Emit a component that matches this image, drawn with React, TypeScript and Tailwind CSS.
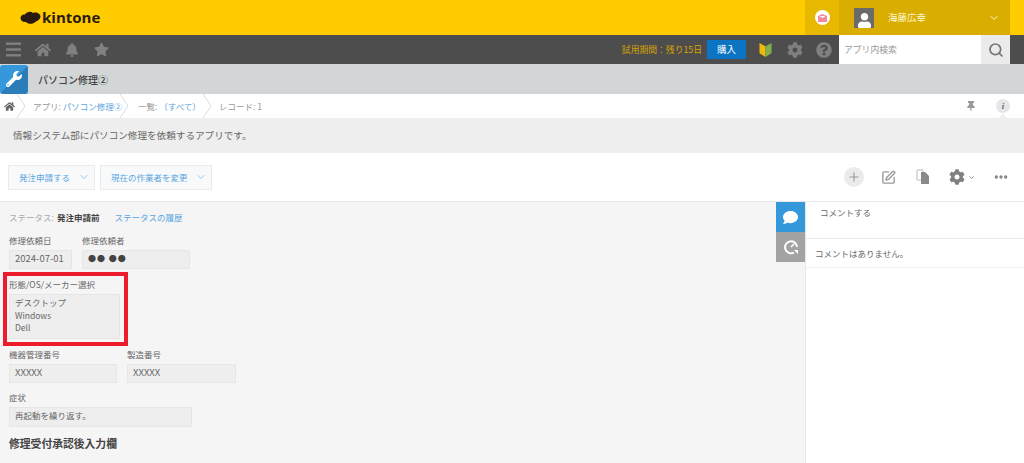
import React from "react";
import { ChevronDown, Search, Plus, SquarePen, Ellipsis } from "lucide-react";
import { FaHome, FaBell, FaStar, FaCog, FaQuestionCircle, FaWrench, FaThumbtack, FaComment, FaUser } from "react-icons/fa";

function Field({ label, value, w, h = "h-[19px]", size = "text-[8.5px]" }: { label: string; value: React.ReactNode; w: string; h?: string; size?: string }) {
  return (
    <div className={w}>
      <div className="text-[8.5px] leading-[10px] text-[#666] h-[15px] whitespace-nowrap">{label}</div>
      <div className={`${h} ${size} bg-[#eeeeee] border border-[#e6e6e6] pl-[5px] leading-[15px] text-[#666] whitespace-nowrap`}>{value}</div>
    </div>
  );
}

function Sep() {
  return (
    <svg className="absolute right-0 top-0" width="10" height="24" viewBox="0 0 10 24">
      <path d="M1 0 L9 12 L1 24" fill="none" stroke="#dcdcdc" strokeWidth="1" />
    </svg>
  );
}

function Crumb({ children, w, pl }: { children: React.ReactNode; w: string; pl: string }) {
  return (
    <div className={`relative h-full flex items-center ${w}`}>
      <div className={`${pl} text-[8.5px] text-[#999] whitespace-nowrap`}>{children}</div>
      <Sep />
    </div>
  );
}

export default function App() {
  return (
    <div className="relative w-[1024px] h-[463px] overflow-hidden bg-white flex flex-col" style={{ fontFamily: '"Noto Sans CJK JP", "Noto Sans", sans-serif' }}>
      {/* top bar */}
      <div className="h-[35px] shrink-0 bg-[#ffcc00] flex items-center justify-between">
        <div className="flex items-center pl-[20px] gap-[1px]">
          <svg width="21" height="14" viewBox="0 0 21 14"><path d="M0.5 7 C0.5 4.5 3 3 5 3.5 C7 0.5 11 0 13 2 C16 0.5 20.5 2.5 20.5 5.5 C20.5 8 18 9.5 16 10.5 C13 13.5 8 13.5 6 11 C3 11.5 0.5 9.5 0.5 7Z" fill="#2b1a12" /></svg>
          <span className="text-[15px] font-bold text-[#2b1a12] leading-none" style={{ fontFamily: '"Open Sans", sans-serif' }}>kintone</span>
        </div>
        <div className="flex h-full">
          <div className="w-[34px] bg-[#e6b800] flex items-center justify-center">
            <div className="w-[15px] h-[15px] rounded-full bg-white flex items-center justify-center">
              <svg width="9" height="8" viewBox="0 0 9 8">
                <path d="M0 2 L4.5 0 L9 2 V8 H0Z" fill="#f08a9c" />
                <path d="M1.5 2 H7.5 L4.5 4Z" fill="#fff" />
              </svg>
            </div>
          </div>
          <div className="w-[171px] bg-[#d9ae00] flex items-center pl-[15px] mr-[14px]">
            <div className="w-[20px] h-[20px] bg-[#6a6a6a] flex items-end justify-center overflow-hidden">
              <FaUser size={15} color="#fff" />
            </div>
            <span className="ml-[14px] text-[9.5px] text-[#fff6d0] whitespace-nowrap">海藤広幸</span>
            <ChevronDown size={12} color="#fff6d0" className="ml-[62px]" />
          </div>
        </div>
      </div>

      {/* dark nav */}
      <div className="h-[29px] shrink-0 bg-[#4d4d4d] flex items-center justify-between">
        <div className="flex items-center h-full">
          <svg className="ml-[6px]" width="15" height="15" viewBox="0 0 15 15" fill="#808080">
            <rect y="0.5" width="15" height="2.4" /><rect y="6.3" width="15" height="2.4" /><rect y="12.1" width="15" height="2.4" />
          </svg>
          <FaHome size={16} color="#808080" className="ml-[14px]" />
          <FaBell size={14} color="#808080" className="ml-[14px]" />
          <FaStar size={15} color="#808080" className="ml-[15px]" />
        </div>
        <div className="flex items-center h-full">
          <span className="text-[8.8px] text-[#d9a400] whitespace-nowrap">試用期間：残り15日</span>
          <div className="ml-[5px] w-[39px] h-[19px] bg-[#0b75c4] text-white text-[9.5px] flex items-center justify-center">購入</div>
          <svg className="ml-[13px]" width="13" height="16" viewBox="0 0 14 16">
            <path d="M0.5 0.5 L7 4 V15.5 L0.5 11.5Z" fill="#f0b90b" />
            <path d="M13.5 0.5 L7 4 V15.5 L13.5 11.5Z" fill="#7fb04d" />
          </svg>
          <FaCog size={16} color="#7f7f7f" className="ml-[15px]" />
          <FaQuestionCircle size={16} color="#808080" className="ml-[13px]" />
          <div className="ml-[7px] w-[142px] h-full bg-white flex items-center pl-[5px] text-[8.8px] text-[#999]">アプリ内検索</div>
          <div className="w-[29px] h-full bg-[#ebebeb] flex items-center justify-center mr-[14px]">
            <Search size={16} color="#777" strokeWidth={2.6} />
          </div>
        </div>
      </div>

      {/* app title */}
      <div className="h-[30px] shrink-0 bg-[#d2d6d7] flex items-center">
        <div className="w-[28px] h-[29px] bg-linear-to-br from-[#3498db] from-50% to-[#2a7db8] to-50% rounded-[3px] flex items-center justify-center">
          <FaWrench size={16} color="#fff" />
        </div>
        <span className="ml-[10px] text-[10px] font-medium text-[#444]">パソコン修理②</span>
      </div>

      {/* breadcrumb */}
      <div className="h-[24px] shrink-0 bg-white flex items-center justify-between">
        <div className="flex items-center h-full">
          <div className="relative h-full w-[26px] flex items-center pl-[4px]">
            <FaHome size={11} color="#666" />
            <Sep />
          </div>
          <Crumb w="w-[103px]" pl="pl-[7px]">アプリ: <span className="text-[#5aa5e0]">パソコン修理②</span></Crumb>
          <Crumb w="w-[83px]" pl="pl-[9px]">一覧: <span className="text-[#5aa5e0]">（すべて）</span></Crumb>
          <div className="pl-[7px] text-[8.5px] text-[#999] whitespace-nowrap">レコード: 1</div>
        </div>
        <div className="flex items-center">
          <FaThumbtack size={10} color="#999" />
          <div className="relative ml-[20px] mr-[14px] w-[14px] h-[14px] rounded-full bg-[#e4e6e8] flex items-center justify-center text-[9px] italic font-bold text-[#666] leading-none" style={{ fontFamily: '"Liberation Serif", serif' }}>
            i
            <div className="absolute left-[4px] top-[16px] w-[6px] h-[6px] rotate-45 bg-[#eeeeee]" />
          </div>
        </div>
      </div>

      {/* description */}
      <div className="h-[35px] shrink-0 bg-[#eeeeee] flex items-center pl-[13px] text-[9.6px] text-[#666]">
        情報システム部にパソコン修理を依頼するアプリです。
      </div>

      {/* toolbar */}
      <div className="h-[49px] shrink-0 bg-white border-b border-[#e8e8e8] flex items-center justify-between">
        <div className="flex pl-[8px] gap-[5px]">
          <div className="w-[87px] h-[25px] bg-[#f7f9fa] border border-[#ebebeb] flex items-center text-[8.5px] text-[#5aa5e0] pl-[10px] whitespace-nowrap">
            発注申請する<ChevronDown size={12} color="#7ab5e5" strokeWidth={1.5} className="ml-[8px]" />
          </div>
          <div className="w-[112px] h-[25px] bg-[#f7f9fa] border border-[#ebebeb] flex items-center text-[8.5px] text-[#5aa5e0] pl-[10px] whitespace-nowrap">
            現在の作業者を変更<ChevronDown size={12} color="#7ab5e5" strokeWidth={1.5} className="ml-[7px]" />
          </div>
        </div>
        <div className="flex items-center pr-[15px]">
          <div className="w-[20px] h-[20px] rounded-full bg-[#ebebeb] flex items-center justify-center"><Plus size={14} color="#999" /></div>
          <SquarePen size={15} color="#999" strokeWidth={2.2} className="ml-[17px]" />
          <svg className="ml-[20px]" width="14" height="16" viewBox="0 0 14 16">
            <path d="M1 1 H7 V11 H1Z" fill="none" stroke="#bbb" />
            <path d="M5 3 H9 L13 7 V15 H5Z" fill="#8a8a8a" />
          </svg>
          <FaCog size={16} color="#808080" className="ml-[19px]" />
          <ChevronDown size={7} color="#808080" className="ml-[3px]" strokeWidth={3} />
          <Ellipsis size={16} color="#808080" strokeWidth={3} className="ml-[18px]" />
        </div>
      </div>

      {/* body */}
      <div className="flex-1 flex min-h-0">
        <div className="w-[776px] bg-[#f5f5f5] pl-[9px] flex flex-col">
          <div className="h-[30px] flex items-center text-[8.5px] pt-[1px] whitespace-nowrap">
            <span className="text-[#aaa]">ステータス:</span>
            <span className="ml-[3px] font-bold text-[#444]">発注申請前</span>
            <span className="ml-[15px] text-[#5aa5e0]">ステータスの履歴</span>
          </div>
          <div className="flex gap-[10px] mt-[3px]">
            <Field label="修理依頼日" value="2024-07-01" w="w-[63px]" size="text-[9.5px]" />
            <Field label="修理依頼者" value={<span className="text-[#444] text-[8px] font-bold tracking-[1px]">●● ●●</span>} w="w-[108px]" />
          </div>
          <div className="mt-[10px]">
            <Field label="形態/OS/メーカー選択" w="w-[111px]" h="h-[45px]" value={<div className="leading-[12.5px] pt-[1px]">デスクトップ<br />Windows<br />Dell</div>} />
          </div>
          <div className="flex gap-[10px] mt-[10px]">
            <Field label="機器管理番号" value="XXXXX" w="w-[108px]" size="text-[9.5px]" />
            <Field label="製造番号" value="XXXXX" w="w-[109px]" size="text-[9.5px]" />
          </div>
          <div className="mt-[9px]">
            <Field label="症状" value="再起動を繰り返す。" w="w-[183px]" h="h-[20px]" />
          </div>
          <div className="mt-[8px] text-[10.8px] leading-[16px] font-bold text-[#444]">修理受付承認後入力欄</div>
        </div>

        <div className="w-[29px] bg-[#f5f5f5] flex flex-col">
          <div className="h-[30px] bg-[#3498db] flex items-center justify-center">
            <FaComment size={15} color="#fff" />
          </div>
          <div className="h-[30px] bg-[#a3a3a3] flex items-center justify-center">
            <svg width="16" height="16" viewBox="0 0 16 16" fill="none">
              <path d="M11 13.5 A6 6 0 1 1 14 8" stroke="#fff" strokeWidth="2" />
              <path d="M8 8 L11 5" stroke="#fff" strokeWidth="1.6" />
              <path d="M11 11 L15 11 L15 15Z" fill="#fff" />
            </svg>
          </div>
        </div>

        <div className="flex-1 bg-white border-l border-[#e8e8e8]">
          <div className="h-[37px] border-b border-[#e8e8e8] pl-[14px] pt-[4px] text-[8.5px] text-[#666]">コメントする</div>
          <div className="h-[29px] border-b border-[#f0f0f0] pl-[9px] flex items-center text-[8.5px] text-[#666]">コメントはありません。</div>
        </div>
      </div>

      {/* annotation overlay */}
      <div className="absolute left-[3px] top-[272px] w-[125px] h-[74px] border-[4px] border-[#ec1c2d]" />
    </div>
  );
}
